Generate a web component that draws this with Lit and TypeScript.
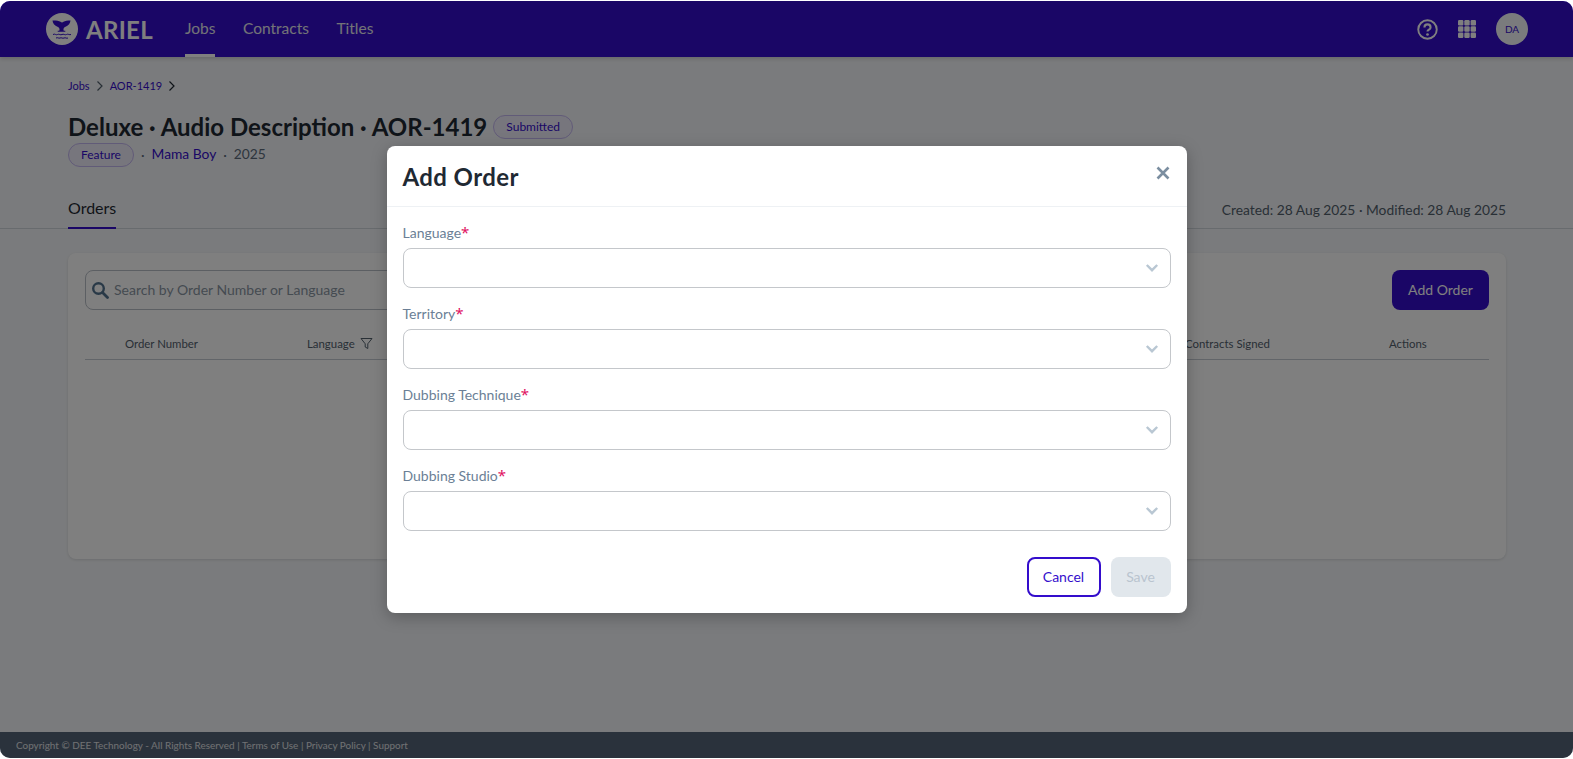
import { LitElement, html, css, svg } from "lit";
import { customElement } from "lit/decorators.js";

const chevron = html`<svg class="chev" viewBox="0 0 16 16" width="16" height="16"><path d="M2.800 5 8 10.200 13.200 5" fill="none" stroke="#b9c7d3" stroke-width="2.400"/></svg>`;
const crumb = (c: string) => html`<svg class="crumb-sep" viewBox="0 0 10 12" width="10" height="12"><path d="M2.500 1.500 7 6 2.500 10.500" fill="none" stroke="${c}" stroke-width="1.200"/></svg>`;

@customElement("app-root")
export class AppRoot extends LitElement {
  static styles = css`
    :host { display: block; height: 759px; background: #fff; font-family: "Lato", "Noto Sans", sans-serif; overflow: hidden; position: relative; }
    * { box-sizing: border-box; }
    .page { height: 757px; margin-top: 1px; border-radius: 10px; overflow: hidden; background: #f5f7fa; display: flex; flex-direction: column; }
    nav { height: 56px; flex: none; background: #340dcc; display: flex; align-items: center; padding: 0 45px 0 46px; box-shadow: 0 2px 4px rgba(0,0,0,.15); color: #fff; }
    .logo { display: flex; align-items: center; gap: 8px; font-size: 24px; font-weight: 700; letter-spacing: .3px; margin-right: 32px; }
    .links { display: flex; gap: 27.500px; height: 100%; font-size: 15.500px; }
    .links a { display: flex; align-items: center; height: 100%; border-bottom: 3px solid transparent; color: #e6e6ee; }
    .links a.on { border-bottom-color: #fff; }
    .right { margin-left: auto; display: flex; align-items: center; gap: 20px; }
    .avatar { width: 32px; height: 32px; border-radius: 50%; background: #f5f7fa; color: #340dcc; font-size: 10px; display: grid; place-items: center; }
    main { flex: 1; padding: 0 67px 0 68px; display: flex; flex-direction: column; }
    .bc { display: flex; align-items: center; gap: 5px; font-size: 11px; color: #340dcc; margin-top: 21px; height: 15px; }
    h1 { margin: 20px 0 0; font: 700 24px/28px "Lato", sans-serif; color: #1f2933; display: flex; align-items: center; gap: 6px; }
    .tag { font: 400 12px/22px "Lato", sans-serif; color: #340dcc; border: 1px solid #c3b6f0; border-radius: 12px; padding: 0 12px; height: 24px; background: #efecfb; }
    .sub { display: flex; align-items: center; gap: 7px; margin-top: 2px; font-size: 13.800px; line-height: 20px; color: #5c6b7a; }
    .sub > a, .sub > span:last-child { position: relative; top: -1px; }
    .sub a { color: #340dcc; }
    .tabs { margin: 30px -67px 0 -68px; padding: 0 67px 0 68px; height: 32px; border-bottom: 1px solid #d0d6dd; display: flex; justify-content: space-between; font-size: 13.800px; color: #52606d; }
    .tab { font-size: 16px; color: #1f2933; height: 32px; border-bottom: 2px solid #340dcc; padding-top: 1px; }
    .dates { padding-top: 4px; }
    .card { margin-top: 24px; height: 306px; background: #fff; border-radius: 8px; box-shadow: 0 1px 3px rgba(0,0,0,.12); padding: 17px; }
    .bar { display: flex; justify-content: space-between; }
    .search { width: 420px; height: 40px; border: 1px solid #b8bec6; border-radius: 8px; display: flex; align-items: center; gap: 5px; padding: 0 5px 1px; font-size: 14px; color: #8a96a3; }
    .add { width: 97px; height: 40px; background: #340dcc; color: #fff; border-radius: 8px; display: grid; place-items: center; font-size: 14px; padding-bottom: 2px; }
    .thead { display: grid; grid-template-columns: 182px 1fr 204px 100px; margin-top: 17px; padding: 10px 0 0 40px; height: 33px; border-bottom: 1px solid #c5cbd2; font-size: 11.400px; color: #52606d; align-items: start; }
    .thead span { display: flex; align-items: center; gap: 5px; }
    footer { height: 26px; flex: none; background: #546478; color: #e0e3e6; font: 9.900px/26px "Lato", sans-serif; letter-spacing: .02px; padding-left: 16px; }
    .overlay { position: absolute; inset: 1px 0 1px; border-radius: 10px; background: rgba(0,0,0,.5); display: flex; justify-content: center; }
    .modal { width: 800px; height: 467px; margin-top: 145px; background: #fff; border-radius: 8px; box-shadow: 0 4px 16px rgba(0,0,0,.25); display: flex; flex-direction: column; }
    .mh { height: 61px; flex: none; border-bottom: 1px solid #eef1f4; display: flex; align-items: center; justify-content: space-between; padding: 0 16px; }
    .mh h2 { margin: 0; font: 700 24px "Lato", sans-serif; letter-spacing: .4px; color: #1f2933; }
    .x { margin-top: -6px; }
    .form { padding: 16px 16px 0; display: flex; flex-direction: column; gap: 16px; }
    label { display: block; height: 20px; font-size: 14px; line-height: 20px; color: #6b7f96; margin-bottom: 5px; overflow: visible; }
    label b { color: #e0115f; font: 400 15px/16px "Noto Sans", sans-serif; }
    .select { height: 40px; border: 1px solid #c4c7cb; border-radius: 8px; display: flex; align-items: center; justify-content: flex-end; padding: 0 10px; }
    .actions { display: flex; justify-content: flex-end; gap: 10px; padding: 26px 16px 0; }
    .btn { width: 74px; height: 40px; border-radius: 8px; display: grid; place-items: center; font-size: 14px; padding-bottom: 1px; }
    .cancel { border: 2px solid #340dcc; color: #340dcc; }
    .save { width: 60px; background: #e1e7ec; color: #b9c4cf; }
  `;

  field(name: string) {
    return html`<div><label>${name}<b>*</b></label><div class="select">${chevron}</div></div>`;
  }

  render() {
    return html`
      <div class="page">
        <nav>
          <div class="logo">
            <svg width="32" height="32" viewBox="0 0 32 32"><circle cx="16" cy="16" r="16" fill="#fff"/><path d="M7.500 7.500c3 0 5.500.3 7 1.200.7.4 1 .8 1.500.8s.8-.4 1.500-.8c1.500-.9 4-1.200 7-1.200-.3 3-2 5-4.500 6-1.500.6-2.300 1.400-2.500 2.500-.1.6 0 1.200.3 1.800h1.500v1h-7.600v-1h1.500c.3-.6.4-1.200.3-1.800-.2-1.100-1-1.900-2.500-2.500-2.500-1-4.200-3-4.500-6z" fill="#340dcc"/><path d="M7 21.500c2-1.200 3 1 4.500 0s3 1 4.500 0 3 1 4.500 0 3 .8 4.500 0M10 25c2-1 2.500.8 4 0s2.500.8 4 0 2.500.8 4 0" stroke="#340dcc" fill="none" stroke-width="1"/></svg>
            ARIEL
          </div>
          <div class="links"><a class="on">Jobs</a><a>Contracts</a><a>Titles</a></div>
          <div class="right">
            <svg width="21" height="21" viewBox="0 0 22 22"><circle cx="11" cy="11" r="9.700" fill="none" stroke="#fff" stroke-width="2"/><path d="M7.800 8.800c0-4.200 6.400-4.200 6.400 0 0 2.400-3.200 2.400-3.200 4.400" fill="none" stroke="#fff" stroke-width="2.200"/><circle cx="11" cy="16.200" r="1.400" fill="#fff"/></svg>
            <svg width="18" height="18" viewBox="0 0 18 18" fill="#fff">${[0, 6.3, 12.6].map((y) => [0, 6.3, 12.6].map((x) => svg`<rect x="${x}" y="${y}" width="5.400" height="5.400" rx="1.200"/>`))}</svg>
            <div class="avatar">DA</div>
          </div>
        </nav>
        <main>
          <div class="bc">Jobs ${crumb("#52606d")} AOR-1419 ${crumb("#1f2933")}</div>
          <h1>Deluxe · Audio Description · AOR-1419 <span class="tag">Submitted</span></h1>
          <div class="sub"><span class="tag">Feature</span> · <a>Mama Boy</a> · <span>2025</span></div>
          <div class="tabs"><div class="tab">Orders</div><div class="dates">Created: 28 Aug 2025 · Modified: 28 Aug 2025</div></div>
          <div class="card">
            <div class="bar">
              <div class="search">
                <svg width="18" height="18" viewBox="0 0 18 18"><circle cx="7.500" cy="7.500" r="5.300" fill="none" stroke="#52728f" stroke-width="2.400"/><path d="M11.500 11.500 16.500 16.500" stroke="#52728f" stroke-width="2.800" stroke-linecap="round"/></svg>
                Search by Order Number or Language
              </div>
              <div class="add">Add Order</div>
            </div>
            <div class="thead">
              <span>Order Number</span>
              <span>Language <svg width="13" height="13" viewBox="0 0 13 13"><path d="M1 1.500h11L7.800 6.800v4.700L5.200 10V6.800z" fill="none" stroke="#52606d"/></svg></span>
              <span>Contracts Signed</span>
              <span>Actions</span>
            </div>
          </div>
        </main>
        <footer>Copyright © DEE Technology - All Rights Reserved | Terms of Use | Privacy Policy | Support</footer>
      </div>
      <div class="overlay">
        <div class="modal">
          <div class="mh"><h2>Add Order</h2>
            <svg class="x" width="16" height="16" viewBox="0 0 16 16"><path d="M2.500 2.500 13.500 13.500M13.500 2.500 2.500 13.500" stroke="#7b8ea0" stroke-width="2.600"/></svg>
          </div>
          <div class="form">
            ${this.field("Language")}${this.field("Territory")}${this.field("Dubbing Technique")}${this.field("Dubbing Studio")}
          </div>
          <div class="actions"><div class="btn cancel">Cancel</div><div class="btn save">Save</div></div>
        </div>
      </div>
    `;
  }
}
